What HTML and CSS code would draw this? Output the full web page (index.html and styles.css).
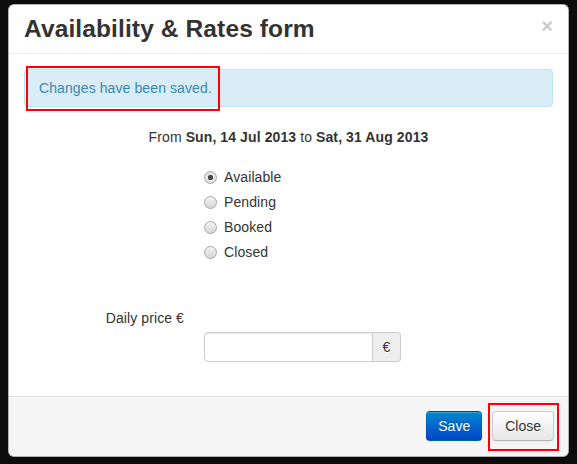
FILE: index.html
```html
<!DOCTYPE html>
<html lang="en">
<head>
    <meta charset="UTF-8" />
    <title>Availability &amp; Rates form</title>
    <link rel="stylesheet" href="styles.css">
</head>
<body>

    <div class="modal">
        <div class="modal-header">
            <button class="close" type="button">&times;</button>
            <h3>Availability &amp; Rates form</h3>
        </div>

        <div class="modal-body">
            <div class="alert">Changes have been saved.</div>

            <p class="period">From <b>Sun, 14 Jul 2013</b> to <b>Sat, 31 Aug 2013</b></p>

            <form class="form-horizontal">
                <div class="controls radios">
                    <label class="radio"><input type="radio" name="state" checked> Available</label>
                    <label class="radio"><input type="radio" name="state"> Pending</label>
                    <label class="radio"><input type="radio" name="state"> Booked</label>
                    <label class="radio"><input type="radio" name="state"> Closed</label>
                </div>

                <label class="control-label">Daily price &euro;</label>
                <div class="controls">
                    <div class="input-append">
                        <input type="text"><span class="add-on">&euro;</span>
                    </div>
                </div>
            </form>
        </div>

        <div class="modal-footer">
            <button class="btn btn-primary">Save</button>
            <button class="btn">Close</button>
        </div>

        <!-- highlight marks -->
        <div class="mark mark-alert"></div>
        <div class="mark mark-close"></div>
    </div>

</body>
</html>
```

FILE: styles.css
```css
body {
    margin: 0;
    padding: 4px 0 0 8px;
    background: #0c0c0c;
    font-family: "Liberation Sans", Arial, sans-serif;
    font-size: 14px;
    line-height: 20px;
    color: #333;
    letter-spacing: 0.1px;
}

.modal {
    position: relative;
    width: 559px;
    height: 451px;
    display: flex;
    flex-direction: column;
    background: #fff;
    border: 1px solid rgba(0,0,0,0.3);
    border-radius: 6px;
}

.modal-header {
    padding: 9px 15px;
    border-bottom: 1px solid #eee;
}

.modal-header h3 {
    margin: 0;
    font-size: 24.5px;
    line-height: 30px;
    font-weight: bold;
    letter-spacing: 0.12px;
}

.close {
    float: right;
    margin-top: 2px;
    padding: 0;
    border: 0;
    background: none;
    font-family: "Liberation Sans", Arial, sans-serif;
    font-size: 20px;
    font-weight: bold;
    line-height: 20px;
    color: #000;
    opacity: .2;
}

.modal-body {
    flex: 1;
    padding: 15px;
}

.alert {
    padding: 8px 35px 8px 14px;
    margin-bottom: 20px;
    background: #d9edf7;
    border: 1px solid #bce8f1;
    border-radius: 4px;
    color: #3a87ad;
}

.period {
    margin: 0 0 20px;
    text-align: center;
}

.form-horizontal {
    margin: 0;
}

.controls {
    margin-left: 180px;
}

.radios {
    margin-bottom: 41px;
}

.radio {
    display: flex;
    align-items: center;
    gap: 7px;
    min-height: 20px;
    margin-bottom: 5px;
}

.radio input {
    appearance: none;
    -webkit-appearance: none;
    width: 13px;
    height: 13px;
    margin: 0;
    border: 1px solid #a6a6a6;
    border-radius: 50%;
    background: linear-gradient(#f4f4f4, #d6d6d6);
    box-sizing: border-box;
}

.radio input:checked {
    background: radial-gradient(circle, #4a4a4a 0 2.5px, #e8e8e8 3px, #d6d6d6);
}

.control-label {
    display: block;
    width: 160px;
    padding-top: 5px;
    margin-bottom: 4px;
    text-align: right;
}

.input-append {
    display: flex;
}

.input-append input {
    width: 169px;
    height: 30px;
    box-sizing: border-box;
    margin: 0;
    padding: 4px 6px;
    border: 1px solid #ccc;
    border-radius: 4px 0 0 4px;
    box-shadow: inset 0 1px 1px rgba(0,0,0,0.075);
    font: inherit;
}

.add-on {
    width: 28px;
    height: 30px;
    box-sizing: border-box;
    padding: 4px 0;
    text-align: center;
    background: #eee;
    border: 1px solid #ccc;
    border-left: 0;
    border-radius: 0 4px 4px 0;
    text-shadow: 0 1px 0 #fff;
}

.modal-footer {
    display: flex;
    justify-content: flex-end;
    gap: 10px;
    padding: 14px 14px 15px;
    background: #f5f5f5;
    border-top: 1px solid #ddd;
    border-radius: 0 0 6px 6px;
    box-shadow: inset 0 1px 0 #fff;
}

.btn {
    height: 30px;
    padding: 4px 12px;
    font-family: "Liberation Sans", Arial, sans-serif;
    font-size: 14px;
    line-height: 20px;
    color: #333;
    text-shadow: 0 1px 1px rgba(255,255,255,0.75);
    background: linear-gradient(#fff, #e6e6e6);
    border: 1px solid #ccc;
    border-bottom-color: #b3b3b3;
    border-radius: 4px;
    box-shadow: inset 0 1px 0 rgba(255,255,255,0.2), 0 1px 2px rgba(0,0,0,0.05);
}

.btn-primary {
    padding: 4px 11px;
    color: #fff;
    text-shadow: 0 -1px 0 rgba(0,0,0,0.25);
    background: linear-gradient(#0088cc, #0044cc);
    border-color: rgba(0,0,0,0.1) rgba(0,0,0,0.1) rgba(0,0,0,0.25);
}

.mark {
    position: absolute;
    border: 2px solid #f00;
    box-sizing: border-box;
}

.mark-alert {
    left: 17px;
    top: 61px;
    width: 194px;
    height: 45px;
}

.mark-close {
    left: 479px;
    top: 398px;
    width: 71px;
    height: 48px;
}
```
